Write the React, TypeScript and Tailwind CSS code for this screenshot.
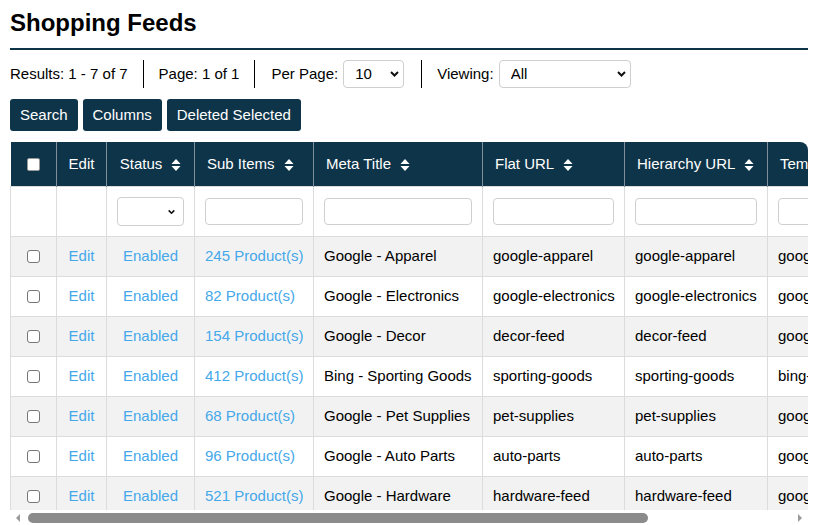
const feeds = [
  { sub: 245, title: "Google - Apparel", flat: "google-apparel", hier: "google-apparel", tpl: "google-shopping" },
  { sub: 82, title: "Google - Electronics", flat: "google-electronics", hier: "google-electronics", tpl: "google-shopping" },
  { sub: 154, title: "Google - Decor", flat: "decor-feed", hier: "decor-feed", tpl: "google-shopping" },
  { sub: 412, title: "Bing - Sporting Goods", flat: "sporting-goods", hier: "sporting-goods", tpl: "bing-shopping" },
  { sub: 68, title: "Google - Pet Supplies", flat: "pet-supplies", hier: "pet-supplies", tpl: "google-shopping" },
  { sub: 96, title: "Google - Auto Parts", flat: "auto-parts", hier: "auto-parts", tpl: "google-shopping" },
  { sub: 521, title: "Google - Hardware", flat: "hardware-feed", hier: "hardware-feed", tpl: "google-shopping" },
];

const Chevron = ({ className }: { className?: string }) => (
  <svg width="9" height="6" viewBox="0 0 9 6" className={className}>
    <polyline points="1,1 4.5,4.5 8,1" fill="none" stroke="#111" strokeWidth="2" />
  </svg>
);

const SortIcon = () => (
  <svg width="10" height="12" viewBox="0 0 10 12" className="ml-[9px] inline-block">
    <path d="M5 0 L9.5 5 H0.5 Z" fill="#fff" />
    <path d="M0.5 7 H9.5 L5 12 Z" fill="#fff" />
  </svg>
);

const Select = ({ value, width }: { value: string; width: string }) => (
  <div className={`relative ${width}`}>
    <select
      defaultValue={value}
      className="w-full h-[28px] appearance-none bg-white border border-[#cfcfcf] rounded-[4px] pl-[11px] text-[15px] text-black outline-none"
    >
      <option>{value}</option>
    </select>
    <Chevron className="absolute right-[5px] top-[11px] pointer-events-none" />
  </div>
);

const FilterInput = () => (
  <input className="w-full h-[27px] bg-white border border-[#cfcfcf] rounded-[4px] outline-none" />
);

export default function App() {
  const thBase = "h-[44px] font-normal border-r border-[#7f8f99] whitespace-nowrap";
  const thLeft = thBase + " text-left pl-[12px] pr-[8px]";
  const thCenter = thBase + " text-center px-[10px]";
  const td = "h-[40px] px-[10px] border border-[#dcdcdc] whitespace-nowrap";

  return (
    <div className="font-['Liberation_Sans',Arial,sans-serif] text-[15px] text-black bg-white px-[10px] pt-[9px] w-[818px] h-[525px] overflow-hidden">
      <h1 className="text-[24px] leading-[28px] font-bold border-b-2 border-[#0e3449] pb-[11px]">Shopping Feeds</h1>

      {/* result bar */}
      <div className="flex items-center h-[28px] mt-[10px]">
        <div className="pr-[15px]">Results: 1 - 7 of 7</div>
        <div className="h-full flex items-center border-l border-black pl-[15px] pr-[15px]">Page: 1 of 1</div>
        <div className="h-full flex items-center border-l border-black pl-[16px] pr-[17px] gap-[5px]">
          <span>Per Page:</span>
          <Select value="10" width="w-[61px]" />
        </div>
        <div className="h-full flex items-center border-l border-black pl-[15px] gap-[5px]">
          <span>Viewing:</span>
          <Select value="All" width="w-[132px]" />
        </div>
      </div>

      {/* actions */}
      <div className="flex gap-[5px] mt-[11px]">
        {["Search", "Columns", "Deleted Selected"].map((b) => (
          <button key={b} className="h-[32px] px-[10px] bg-[#0e3449] text-white rounded-[3px] text-[15px]">
            {b}
          </button>
        ))}
      </div>

      {/* table */}
      <div className="mt-[11px] h-[368px] overflow-hidden rounded-tr-[8px]">
        <table className="table-fixed border-collapse w-[986px]">
          <colgroup>
            <col className="w-[46px]" />
            <col className="w-[50px]" />
            <col className="w-[88px]" />
            <col className="w-[119px]" />
            <col className="w-[169px]" />
            <col className="w-[142px]" />
            <col className="w-[143px]" />
            <col className="w-[229px]" />
          </colgroup>
          <thead>
            <tr className="bg-[#0e3449] text-white">
              <th className={thCenter}>
                <input type="checkbox" className="appearance-none w-[13px] h-[13px] bg-white border border-[#9a9a9a] rounded-[2px] align-middle" />
              </th>
              <th className={thCenter}>Edit</th>
              <th className={thCenter}>Status<SortIcon /></th>
              <th className={thLeft}>Sub Items<SortIcon /></th>
              <th className={thLeft}>Meta Title<SortIcon /></th>
              <th className={thLeft}>Flat URL<SortIcon /></th>
              <th className={thLeft}>Hierarchy URL<SortIcon /></th>
              <th className={thLeft + " border-r-0"}>Template<SortIcon /></th>
            </tr>
          </thead>
          <tbody>
            <tr className="bg-white">
              <td className="h-[50px] border border-[#dcdcdc]" />
              <td className="h-[50px] border border-[#dcdcdc]" />
              <td className="h-[50px] px-[10px] border border-[#dcdcdc]">
                <div className="relative">
                  <select className="w-full h-[29px] appearance-none bg-white border border-[#cfcfcf] rounded-[4px] outline-none" />
                  <Chevron className="absolute right-[8px] top-[12px] pointer-events-none scale-[0.8]" />
                </div>
              </td>
              {[0, 1, 2, 3, 4].map((i) => (
                <td key={i} className="h-[50px] px-[10px] border border-[#dcdcdc]">
                  <FilterInput />
                </td>
              ))}
            </tr>
            {feeds.map((f, i) => (
              <tr key={f.title} className={i % 2 === 0 ? "bg-[#f2f2f2]" : "bg-white"}>
                <td className={td + " text-center"}>
                  <input type="checkbox" className="appearance-none w-[13px] h-[13px] bg-white border border-[#767676] rounded-[3px] align-middle" />
                </td>
                <td className={td + " text-center text-[#45a8ea]"}>Edit</td>
                <td className={td + " text-center text-[#45a8ea]"}>Enabled</td>
                <td className={td + " text-[#45a8ea]"}>{f.sub} Product(s)</td>
                <td className={td}>{f.title}</td>
                <td className={td}>{f.flat}</td>
                <td className={td}>{f.hier}</td>
                <td className={td}>{f.tpl}</td>
              </tr>
            ))}
          </tbody>
        </table>
      </div>

      {/* horizontal scrollbar */}
      <div className="flex items-center h-[15px] bg-white">
        <div className="w-[16px] h-full flex items-center justify-center">
          <div className="w-0 h-0 border-y-[4px] border-y-transparent border-r-[4px] border-r-[#9a9a9a]" />
        </div>
        <div className="flex-1 h-full flex items-center pl-[2px]">
          <div className="w-[620px] h-[10px] rounded-full bg-[#8b8b8b]" />
        </div>
        <div className="w-[16px] h-full flex items-center justify-center">
          <div className="w-0 h-0 border-y-[4px] border-y-transparent border-l-[4px] border-l-[#9a9a9a]" />
        </div>
      </div>
    </div>
  );
}
